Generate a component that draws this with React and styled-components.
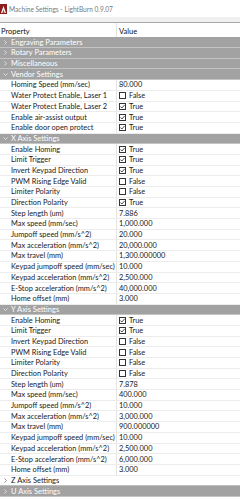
import React from "react";
import styled, { createGlobalStyle } from "styled-components";

const GlobalStyle = createGlobalStyle`
  html, body {
    margin: 0;
    padding: 0;
    background: #ffffff;
  }
  body {
    font-family: "Segoe UI", Lato, "Noto Sans", sans-serif;
  }
`;

const axisRows = (vals) => [
  { name: "Enable Homing", check: vals.homing },
  { name: "Limit Trigger", check: vals.limit },
  { name: "Invert Keypad Direction", check: vals.invert },
  { name: "PWM Rising Edge Valid", check: vals.pwm },
  { name: "Limiter Polarity", check: vals.limiter },
  { name: "Direction Polarity", check: vals.direction },
  { name: "Step length (um)", value: vals.step },
  { name: "Max speed (mm/sec)", value: vals.maxSpeed },
  { name: "Jumpoff speed (mm/s^2)", value: vals.jumpoff },
  { name: "Max acceleration (mm/s^2)", value: vals.maxAccel },
  { name: "Max travel (mm)", value: vals.travel },
  { name: "Keypad jumpoff speed (mm/sec)", value: "10.000" },
  { name: "Keypad acceleration (mm/s^2)", value: "2,500.000" },
  { name: "E-Stop acceleration (mm/s^2)", value: vals.estop },
  { name: "Home offset (mm)", value: "3.000" },
];

const sections = [
  { title: "Engraving Parameters", open: false },
  { title: "Rotary Parameters", open: false },
  { title: "Miscellaneous", open: false },
  {
    title: "Vendor Settings",
    open: true,
    rows: [
      { name: "Homing Speed (mm/sec)", value: "80.000" },
      { name: "Water Protect Enable, Laser 1", check: false },
      { name: "Water Protect Enable, Laser 2", check: true },
      { name: "Enable air-assist output", check: true },
      { name: "Enable door open protect", check: true },
    ],
  },
  {
    title: "X Axis Settings",
    open: true,
    rows: axisRows({
      homing: true,
      limit: true,
      invert: true,
      pwm: false,
      limiter: false,
      direction: true,
      step: "7.886",
      maxSpeed: "1,000.000",
      jumpoff: "20.000",
      maxAccel: "20,000.000",
      travel: "1,300.000000",
      estop: "40,000.000",
    }),
  },
  {
    title: "Y Axis Settings",
    open: true,
    rows: axisRows({
      homing: true,
      limit: true,
      invert: false,
      pwm: false,
      limiter: false,
      direction: false,
      step: "7.878",
      maxSpeed: "400.000",
      jumpoff: "10.000",
      maxAccel: "3,000.000",
      travel: "900.000000",
      estop: "6,000.000",
    }),
  },
  { title: "Z Axis Settings", open: false, light: true },
  { title: "U Axis Settings", open: false },
];

const Window = styled.div`
  width: 240px;
  height: 500px;
  overflow: hidden;
  background: #ffffff;
  display: flex;
  flex-direction: column;
`;

const TitleBar = styled.div`
  height: 17px;
  display: flex;
  align-items: center;
  gap: 2px;
  color: #7a7a7a;
  font-size: 6.6px;
  flex-shrink: 0;
`;

const Strip = styled.div`
  height: 5px;
  background: #f0f0f0;
  border-bottom: 1px solid #a8a8a8;
  flex-shrink: 0;
`;

const Header = styled.div`
  display: grid;
  grid-template-columns: 116px 1fr;
  height: 14.4px;
  align-items: center;
  font-size: 7.5px;
  color: #111;
  flex-shrink: 0;
`;

const HeaderCell = styled.div`
  padding-left: ${(p) => (p.$first ? "1px" : "2px")};
  height: 100%;
  display: flex;
  align-items: center;
  padding-top: 2px;
  box-sizing: border-box;
  border-left: ${(p) => (p.$first ? "none" : "1px solid #e3e3e3")};
`;

const GroupRow = styled.div`
  box-sizing: border-box;
  height: 10.7px;
  flex-shrink: 0;
  display: flex;
  align-items: center;
  background: ${(p) => (p.$light ? "#ffffff" : "#a2a2a2")};
  color: ${(p) => (p.$light ? "#1a1a1a" : "#ffffff")};
  border-bottom: 1px solid ${(p) => (p.$light ? "#bdbdbd" : "#c4c4c4")};
  font-size: 7.5px;
`;

const Arrow = styled.span`
  width: 11px;
  display: flex;
  justify-content: center;
  color: ${(p) => (p.$light ? "#8a8a8a" : "#e6e6e6")};
`;

const Row = styled.div`
  box-sizing: border-box;
  height: 10.7px;
  flex-shrink: 0;
  display: grid;
  grid-template-columns: 116px 1fr;
  border-bottom: 1px solid #ececec;
  font-size: 7.4px;
  color: #1a1a1a;
`;

const NameCell = styled.div`
  padding-left: 11px;
  display: flex;
  align-items: center;
  white-space: nowrap;
  overflow: hidden;
`;

const ValueCell = styled.div`
  border-left: 1px solid #e3e3e3;
  padding-left: 2px;
  display: flex;
  align-items: center;
  gap: 3px;
  white-space: nowrap;
`;

const Box = styled.span`
  width: 7px;
  height: 7px;
  box-sizing: border-box;
  border: 1px solid #333333;
  background: #ffffff;
  display: flex;
  align-items: center;
  justify-content: center;
`;

const Logo = () => (
  <svg width="7" height="10" viewBox="0 0 7 10">
    <rect x="0" y="0" width="7" height="10" fill="#8b1d1d" />
    <path d="M1 9 L3.5 2 L6 9 Z" fill="#ffffff" />
    <path d="M2.3 9 L3.5 5.5 L4.7 9 Z" fill="#c23a2a" />
  </svg>
);

const Chevron = ({ open }) => (
  <svg width="5" height="5" viewBox="0 0 5 5">
    {open ? (
      <path d="M0.5 1.5 L2.5 3.5 L4.5 1.5" fill="none" stroke="currentColor" strokeWidth="0.9" />
    ) : (
      <path d="M1.5 0.5 L3.5 2.5 L1.5 4.5" fill="none" stroke="currentColor" strokeWidth="0.9" />
    )}
  </svg>
);

const Check = ({ on }) => (
  <Box>
    {on && (
      <svg width="5" height="5" viewBox="0 0 5 5">
        <path d="M0.4 2.5 L1.9 4 L4.6 0.9" fill="none" stroke="#222" strokeWidth="0.8" />
      </svg>
    )}
  </Box>
);

export default function App() {
  return (
    <Window>
      <GlobalStyle />
      <TitleBar>
        <Logo />
        <span>Machine Settings - LightBurn 0.9.07</span>
      </TitleBar>
      <Strip />
      <Header>
        <HeaderCell $first>Property</HeaderCell>
        <HeaderCell>Value</HeaderCell>
      </Header>
      {sections.map((s) => (
        <React.Fragment key={s.title}>
          <GroupRow $light={s.light}>
            <Arrow $light={s.light}>
              <Chevron open={s.open} />
            </Arrow>
            {s.title}
          </GroupRow>
          {s.open &&
            s.rows.map((r, i) => (
              <Row key={s.title + i}>
                <NameCell>{r.name}</NameCell>
                <ValueCell>
                  {r.value !== undefined ? (
                    r.value
                  ) : (
                    <>
                      <Check on={r.check} />
                      {r.check ? "True" : "False"}
                    </>
                  )}
                </ValueCell>
              </Row>
            ))}
        </React.Fragment>
      ))}
    </Window>
  );
}
